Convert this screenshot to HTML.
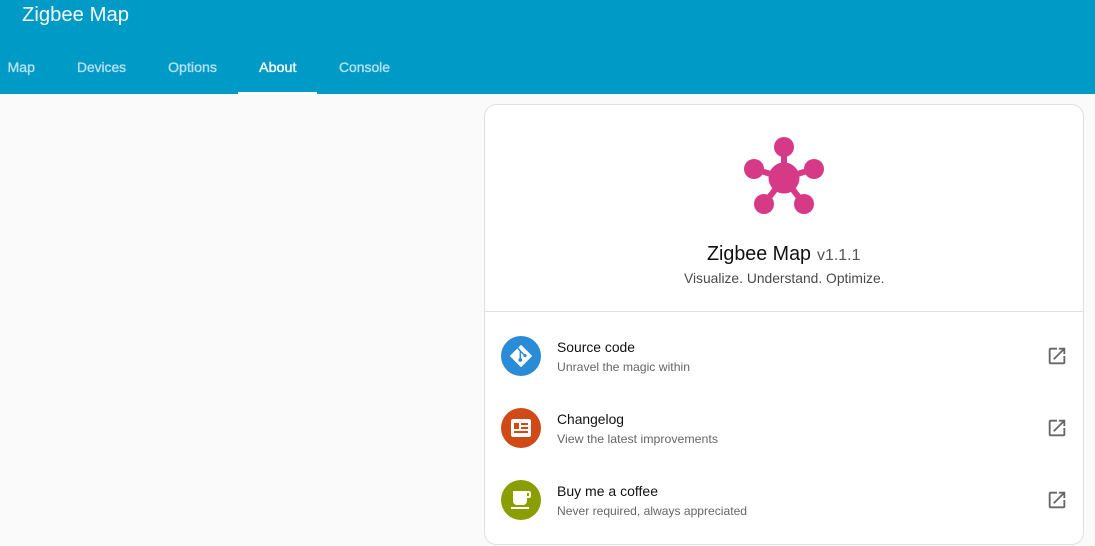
<!DOCTYPE html>
<html lang="en">
<head>
<meta charset="utf-8">
<title>Zigbee Map</title>
<style>
html,body{margin:0;padding:0;width:1095px;height:546px;overflow:hidden;background:#fafafa}
svg{display:block;position:absolute;left:0;top:0}
text{font-family:"Liberation Sans",sans-serif;white-space:pre}
.tab{font-size:14px;fill:#b3e1ef;stroke:#b3e1ef;stroke-width:.35px}
.t{font-size:14px;fill:#111}
.s{font-size:12px;fill:#666}
</style>
</head>
<body>
<svg width="1095" height="546" viewBox="0 0 1095 546" xmlns="http://www.w3.org/2000/svg">
  <rect x="0" y="0" width="1095" height="94" fill="#009ac7"/>
  <text x="22" y="21" font-size="20" fill="#f2fafd" textLength="107" lengthAdjust="spacingAndGlyphs">Zigbee Map</text>
  <text class="tab" x="7.5" y="72" textLength="27.5" lengthAdjust="spacingAndGlyphs">Map</text>
  <text class="tab" x="77" y="72" textLength="49" lengthAdjust="spacingAndGlyphs">Devices</text>
  <text class="tab" x="168" y="72" textLength="49" lengthAdjust="spacingAndGlyphs">Options</text>
  <text class="tab" x="259" y="72" textLength="37.5" lengthAdjust="spacingAndGlyphs" style="fill:#fff;stroke:#fff">About</text>
  <text class="tab" x="339" y="72" textLength="51" lengthAdjust="spacingAndGlyphs">Console</text>
  <rect x="238" y="92" width="79" height="2" fill="#fff"/>

  <rect x="484.5" y="104.5" width="599" height="440" rx="12" ry="12" fill="#fff" stroke="#e0e0e0"/>

  <g fill="#d63a86" stroke="#d63a86">
    <path d="M784 178L784 147M784 178L754 169M784 178L814 169M784 178L764 204M784 178L804 204" stroke-width="6" fill="none"/>
    <g stroke="none">
      <circle cx="784" cy="178" r="15.5"/>
      <circle cx="784" cy="147" r="10"/>
      <circle cx="754" cy="169" r="10"/>
      <circle cx="814" cy="169" r="10"/>
      <circle cx="764" cy="204" r="10"/>
      <circle cx="804" cy="204" r="10"/>
    </g>
  </g>

  <text x="707" y="260" font-size="20" fill="#111" textLength="104" lengthAdjust="spacingAndGlyphs">Zigbee Map</text>
  <text x="817" y="260" font-size="16" fill="#555" textLength="43.5" lengthAdjust="spacingAndGlyphs">v1.1.1</text>
  <text x="684" y="283" font-size="14" fill="#4a4a4a" textLength="200.5" lengthAdjust="spacingAndGlyphs">Visualize. Understand. Optimize.</text>

  <rect x="485" y="311" width="598" height="1" fill="#e0e0e0"/>

  <circle cx="521" cy="356" r="20" fill="#2a8bd6"/>
  <path d="M521 345.5L531.5 356L521 366.5L510.5 356Z" fill="#fff" stroke="#fff" stroke-width="1" stroke-linejoin="round"/>
  <path d="M516.8 346.8L520.3 351L520.3 360M520.3 351L525 355.6" fill="none" stroke="#2a8bd6" stroke-width="1.5"/>
  <circle cx="520.3" cy="360" r="1.9" fill="#2a8bd6"/>
  <circle cx="525" cy="355.6" r="1.6" fill="#2a8bd6"/>
  <text class="t" x="557" y="352" textLength="78" lengthAdjust="spacingAndGlyphs">Source code</text>
  <text class="s" x="557" y="371" textLength="133" lengthAdjust="spacingAndGlyphs">Unravel the magic within</text>
  <svg x="1046" y="345" width="22" height="22" viewBox="0 0 24 24"><path fill="#666" d="M14,3V5H17.59L7.76,14.83L9.17,16.24L19,6.41V10H21V3M19,19H5V5H12V3H5C3.89,3 3,3.9 3,5V19A2,2 0 0,0 5,21H19A2,2 0 0,0 21,19V12H19V19Z"/></svg>

  <circle cx="521" cy="428" r="20" fill="#cf4a17"/>
  <svg x="509" y="416" width="24" height="24" viewBox="0 0 24 24"><path fill="#fff" d="M20 3H4C2.89 3 2 3.89 2 5V19C2 20.11 2.89 21 4 21H20C21.11 21 22 20.11 22 19V5C22 3.89 21.11 3 20 3M5 7H10V13H5V7M19 17H5V15H19V17M19 13H12V11H19V13M19 9H12V7H19V9Z"/></svg>
  <text class="t" x="557" y="424" textLength="67" lengthAdjust="spacingAndGlyphs">Changelog</text>
  <text class="s" x="557" y="443" textLength="161" lengthAdjust="spacingAndGlyphs">View the latest improvements</text>
  <svg x="1046" y="417" width="22" height="22" viewBox="0 0 24 24"><path fill="#666" d="M14,3V5H17.59L7.76,14.83L9.17,16.24L19,6.41V10H21V3M19,19H5V5H12V3H5C3.89,3 3,3.9 3,5V19A2,2 0 0,0 5,21H19A2,2 0 0,0 21,19V12H19V19Z"/></svg>

  <circle cx="521" cy="500" r="20" fill="#8a9e00"/>
  <svg x="509" y="488" width="24" height="24" viewBox="0 0 24 24"><path fill="#fff" d="M2,21H20V19H2M20,8H18V5H20M20,3H4V13A4,4 0 0,0 8,17H14A4,4 0 0,0 18,13V10H20A2,2 0 0,0 22,8V5C22,3.89 21.1,3 20,3Z"/></svg>
  <text class="t" x="557" y="496" textLength="101" lengthAdjust="spacingAndGlyphs">Buy me a coffee</text>
  <text class="s" x="557" y="515" textLength="190" lengthAdjust="spacingAndGlyphs">Never required, always appreciated</text>
  <svg x="1046" y="489" width="22" height="22" viewBox="0 0 24 24"><path fill="#666" d="M14,3V5H17.59L7.76,14.83L9.17,16.24L19,6.41V10H21V3M19,19H5V5H12V3H5C3.89,3 3,3.9 3,5V19A2,2 0 0,0 5,21H19A2,2 0 0,0 21,19V12H19V19Z"/></svg>
</svg>
</body>
</html>
